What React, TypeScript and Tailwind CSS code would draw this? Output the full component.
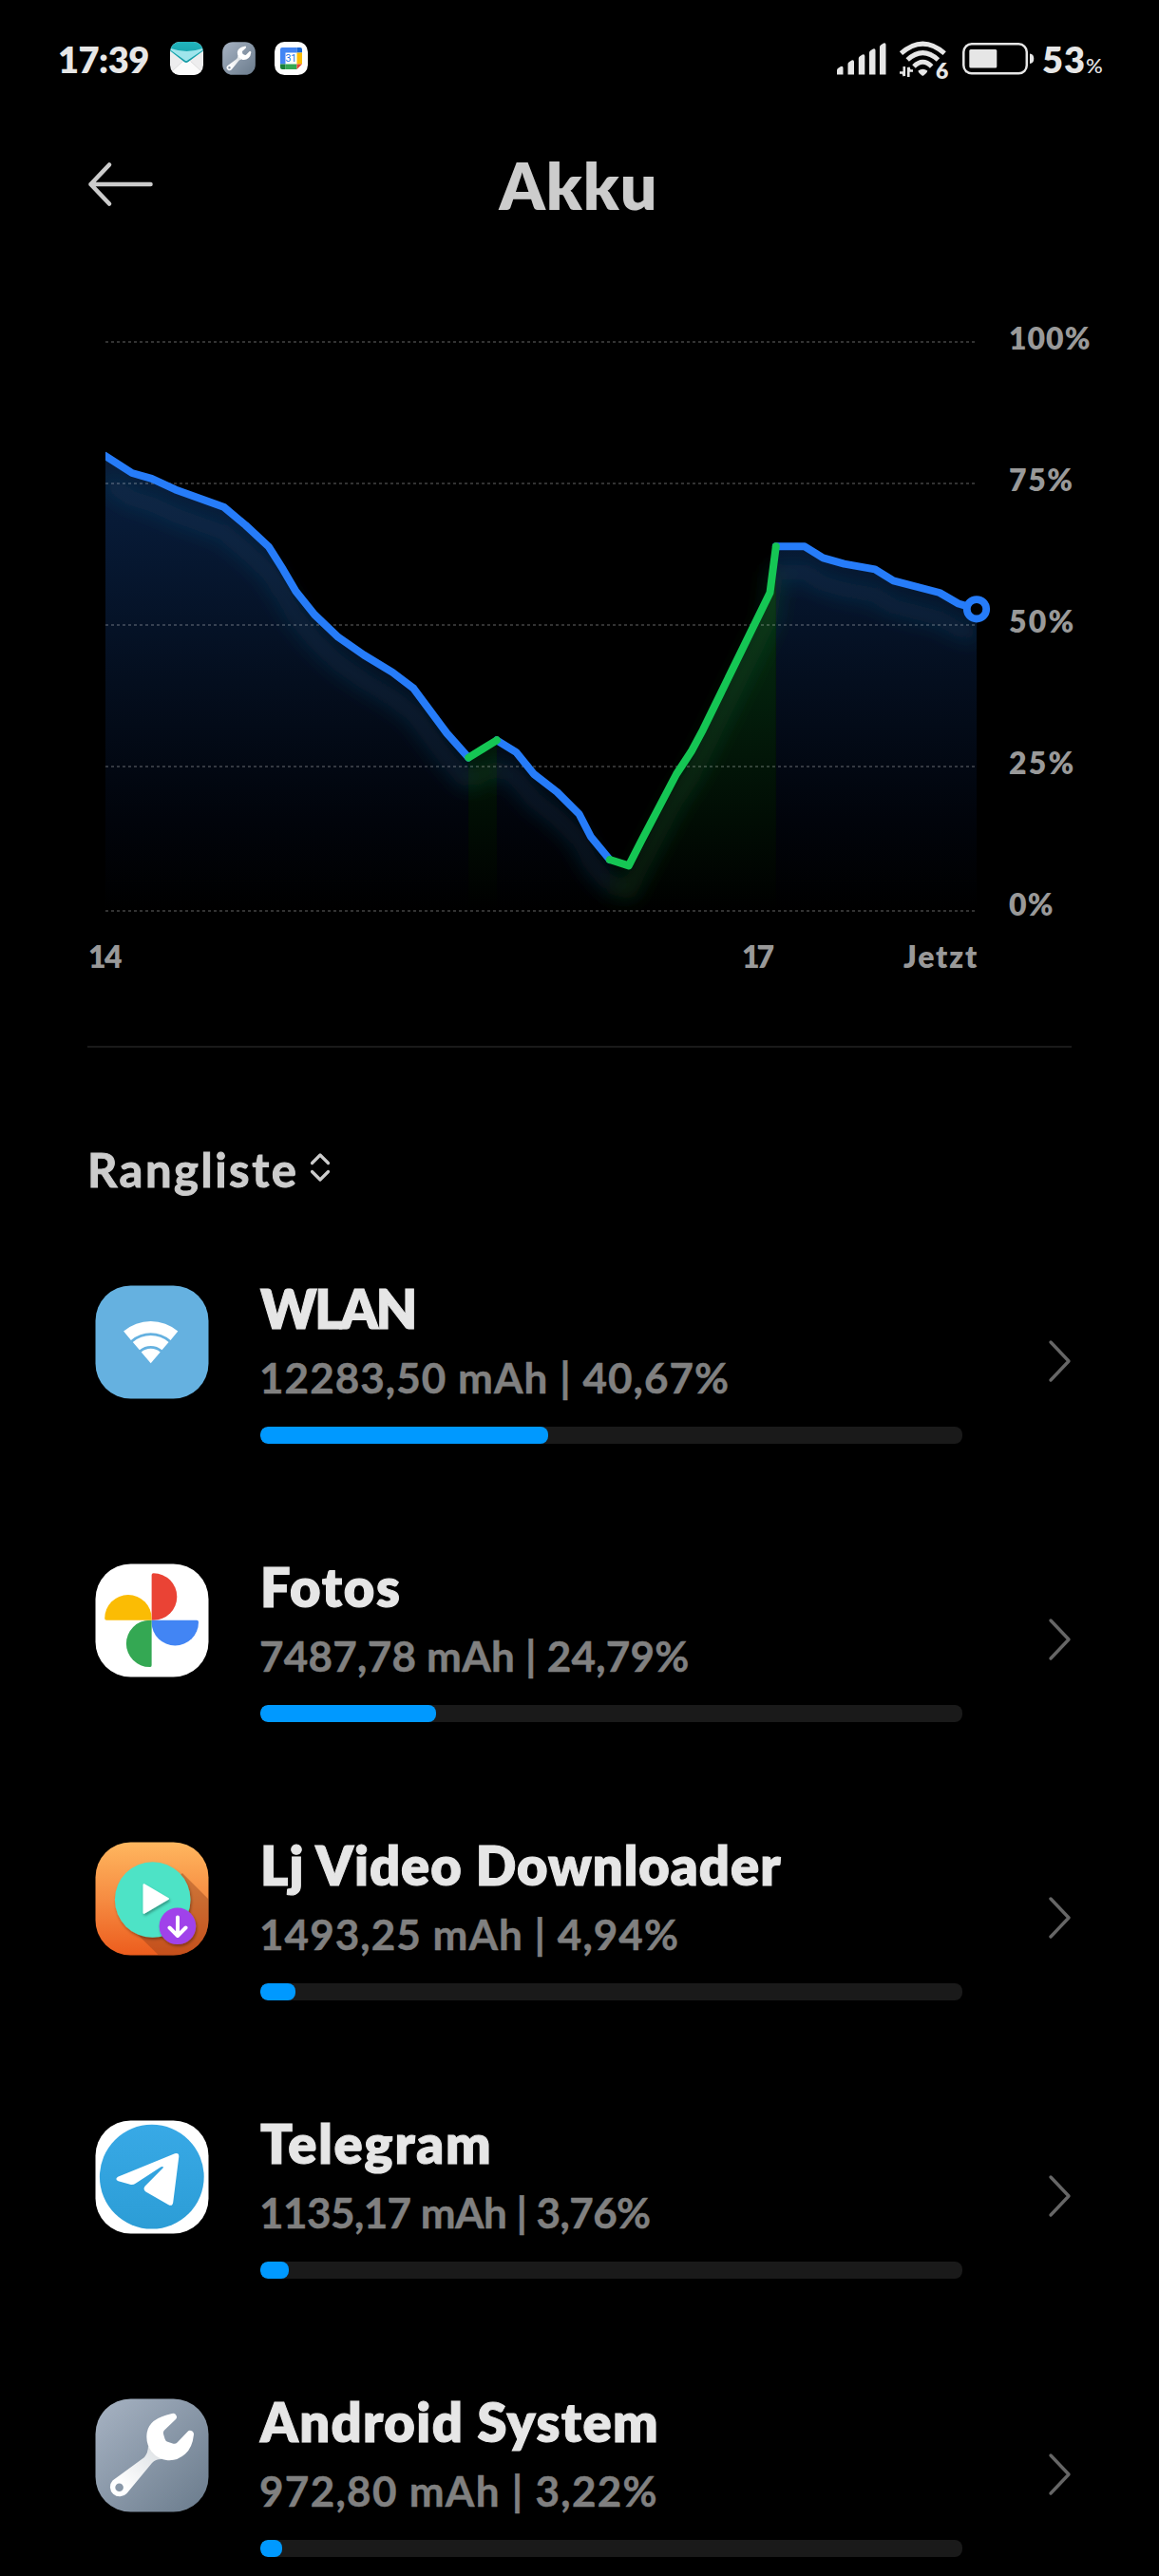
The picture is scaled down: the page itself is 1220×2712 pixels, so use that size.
import type { ReactNode } from "react";

type Point = [number, number];

/* ---------- Status bar ---------- */

function MailIcon() {
  return (
    <svg viewBox="0 0 35 35" className="size-[35px]">
      <defs>
        <clipPath id="mail-clip"><rect width="35" height="35" rx="10.5" /></clipPath>
        <linearGradient id="mail-top" x1="0" y1="0" x2="0" y2="1">
          <stop offset="0" stopColor="#22b5bd" />
          <stop offset="1" stopColor="#1299a3" />
        </linearGradient>
      </defs>
      <g clipPath="url(#mail-clip)">
        <rect width="35" height="35" fill="#ededee" />
        <path d="M0 33 L14 20 H21 L35 33 V35 H0z" fill="#fbfbfb" />
        <path d="M1.5 31.500 L13.500 20.500 M33.500 31.500 L21.500 20.500" stroke="#cfcfd0" strokeWidth=".6" />
        <path d="M0 0H35V9.500 L19 21.300 Q17 22.800 15 21.300 L0 9.500z" fill="url(#mail-top)" />
        <path d="M1 7 Q17.500 13 34 7 L34 9 L18.500 19.600 Q17 20.700 15.500 19.600 L1 9z" fill="#9fe5ec" />
      </g>
    </svg>
  );
}

function WrenchIcon({ id, className }: { id: string; className: string }) {
  return (
    <svg viewBox="0 0 120 120" className={className}>
      <defs>
        <linearGradient id={`${id}-bg`} x1="0" y1="0" x2="1" y2="1">
          <stop offset="0" stopColor="#a7b3c3" />
          <stop offset="1" stopColor="#6a7b8c" />
        </linearGradient>
        <linearGradient id={`${id}-arm`} x1="66" y1="56" x2="30" y2="95" gradientUnits="userSpaceOnUse">
          <stop offset="0" stopColor="#dfe3e6" />
          <stop offset="1" stopColor="#ffffff" />
        </linearGradient>
      </defs>
      <rect x=".5" y=".5" width="119" height="119" rx="37" fill={`url(#${id}-bg)`} />
      <path
        fillRule="evenodd"
        fill={`url(#${id}-arm)`}
        d="M56 50 Q56 57 52 62 L18.500 86.500 A10 10 0 1 0 33.500 100 L60 68 Q64 63.500 71 64z M25.600 89.400 a4.300 4.300 0 1 1 0 8.600 a4.300 4.300 0 1 1 0 -8.600z"
      />
      <path
        fill="#fff"
        d="M81 16 Q84.500 14.800 85.800 18.500 Q86.500 20.500 85 22 L73 33.500 Q71.500 35 72 37.500 L73.500 42.500 Q74.200 45 76.500 45.800 L82.500 47.700 Q84.800 48.300 86.500 46.500 L97.500 35 Q99 33.400 101 34 Q104.200 35 104 38 Q102.500 52 95 58.500 Q86.500 66 76.500 65.200 Q66 64 59.500 56 Q53 47 54.700 36 Q57 21 81 16z"
      />
    </svg>
  );
}

function CalendarIcon() {
  return (
    <svg viewBox="0 0 35 35" className="size-[35px]">
      <rect width="35" height="35" rx="10.500" fill="#fff" />
      <path d="M6 8 Q6 6 8 6H23.500V11.500H11.500V23.500H6z" fill="#4285f4" />
      <path d="M23.500 6H27 Q29 6 29 8V11.500H23.500z" fill="#1967d2" />
      <path d="M23.500 11.500H29V23.500H23.500z" fill="#fbbc04" />
      <path d="M11.500 23.500H23.500V29H11.500z" fill="#34a853" />
      <path d="M6 23.500H11.500V29H8 Q6 29 6 27z" fill="#188038" />
      <path d="M23.500 23.500H29L23.500 29z" fill="#ea4335" />
      <text x="17.300" y="21.300" textAnchor="middle" fontSize="10.500" fontFamily="Roboto, sans-serif" fill="#1a73e8">31</text>
    </svg>
  );
}

function SignalIcon() {
  const bars: Point[] = [[1, 25.500], [12.500, 19], [23.800, 13], [35, 7], [46, 1]];
  return (
    <svg viewBox="0 0 54 36" className="h-9 w-[54px]" fill="#e6e6e6">
      {bars.map(([x, top]) => (
        <path key={x} d={`M${x} ${top + 4.500} Q${x} ${top + 3} ${x + 1.300} ${top + 2.200} L${x + 4} ${top + 0.400} Q${x + 6.500} ${top - 0.500} ${x + 6.500} ${top + 2} V34.500 H${x}z`} />
      ))}
    </svg>
  );
}

function StatusWifiIcon() {
  return (
    <svg viewBox="0 0 56 50" className="h-[50px] w-14">
      <g fill="none" stroke="#e6e6e6" strokeWidth="5" strokeLinecap="butt">
        <path d="M3.500 15.200 Q26.300 -5 49.200 15.200" />
        <path d="M10.200 22 Q26.300 7.300 42.500 22" />
        <path d="M17 29 Q26.300 19.500 35.700 29" />
      </g>
      <path d="M21.500 33.500 Q26.300 30 31.300 33.500 Q31.500 35 27.500 38.300 Q26.300 39.300 25.200 38.300 Q21.200 35 21.500 33.500z" fill="#e6e6e6" />
      <g stroke="#e6e6e6" strokeWidth="2.600" fill="none">
        <path d="M6.800 29V39 M2 35.500 H5.500 L6.800 39" />
        <path d="M11.300 40V30 L12.600 33.500 H16" />
      </g>
      <text x="39.900" y="42.300" fontSize="23" fontFamily="Lato, sans-serif" fontWeight="800" fill="#e6e6e6" stroke="#000" strokeWidth="3" paintOrder="stroke">6</text>
    </svg>
  );
}

function BatteryIcon() {
  return (
    <svg viewBox="0 0 76 34" className="h-[34px] w-[76px]">
      <rect x="1.300" y="1.300" width="66.500" height="31" rx="8.500" fill="none" stroke="#e6e6e6" strokeWidth="2.500" />
      <rect x="7.300" y="7" width="29" height="19.500" rx="1.500" fill="#e6e6e6" />
      <path d="M71 11.500 Q75.300 12 75.300 16.800 Q75.300 21.500 71 22z" fill="#e6e6e6" />
    </svg>
  );
}

function StatusBar() {
  return (
    <div className="flex h-[140px] shrink-0 items-start pt-[42px] pr-[59px] pl-[61px] text-[#e6e6e6]">
      <span className="w-[118px] text-[38px] leading-10 font-extrabold tracking-[-0.5px]">17:39</span>
      <div className="mt-0.5 flex gap-5">
        <MailIcon />
        <WrenchIcon id="status-wrench" className="size-[35px]" />
        <CalendarIcon />
      </div>
      <div className="mt-0.5 ml-auto flex items-start">
        <SignalIcon />
        <div className="-mt-[3px] ml-[11px]"><StatusWifiIcon /></div>
        <div className="mt-px ml-3"><BatteryIcon /></div>
      </div>
      <div className="ml-2 flex w-16 items-baseline leading-10">
        <span className="text-[38px] font-extrabold tracking-[1px]">53</span>
        <span className="text-[22px] font-medium">%</span>
      </div>
    </div>
  );
}

/* ---------- Chart ---------- */

type Run = { kind: "drain" | "charge"; points: Point[] };

const runs: Run[] = [
  {
    kind: "drain",
    points: [
      [111, 480], [139, 498], [159.600, 503.800], [184.600, 515.400], [235.400, 533.700], [258.600, 553], [282.900, 575.700],
      [297.900, 599.400], [311.400, 622.600], [331, 647], [356, 670.800], [382.900, 689.500], [413.200, 707.900],
      [435.400, 724.800], [470.400, 772], [493.200, 797.600],
    ],
  },
  {
    kind: "drain",
    points: [
      [522.900, 779.300], [543.200, 791.800], [562, 815], [586.400, 833.800], [609.600, 857], [622, 881], [641.800, 905],
    ],
  },
  {
    kind: "drain",
    points: [
      [816.800, 575.300], [847, 575.300], [866.400, 587.300], [888.600, 593.600], [921, 599.400], [940.400, 611.400],
      [989, 624], [1008.800, 635.500], [1028, 641.300],
    ],
  },
  { kind: "charge", points: [[493.200, 797.600], [522.900, 779.300]] },
  {
    kind: "charge",
    points: [
      [641.800, 905], [661.800, 911.400], [675, 885.500], [712, 815], [727.600, 791.300], [739.800, 768.600], [810.500, 624],
      [816.800, 575.300],
    ],
  },
];

const GRID = [360, 509, 658, 807, 959];
const BASE = 958;
const lineColor = { drain: "#267cf9", charge: "#15c654" };
const toLine = (pts: Point[]) => "M" + pts.map(([x, y]) => `${x} ${y}`).join("L");
const toArea = (pts: Point[]) => `${toLine(pts)}L${pts[pts.length - 1][0]} ${BASE}L${pts[0][0]} ${BASE}z`;

function BatteryChart() {
  return (
    <svg viewBox="93 340 967 640" className="h-[640px] w-[967px] shrink-0">
      <defs>
        <linearGradient id="area-drain" x1="0" y1="480" x2="0" y2={BASE} gradientUnits="userSpaceOnUse">
          <stop offset="0" stopColor="#091e3a" />
          <stop offset=".15" stopColor="#071a36" />
          <stop offset=".5" stopColor="#040e1e" />
          <stop offset=".8" stopColor="#01040b" />
          <stop offset="1" stopColor="#000000" />
        </linearGradient>
        <linearGradient id="area-charge" x1="0" y1="575" x2="0" y2={BASE} gradientUnits="userSpaceOnUse">
          <stop offset="0" stopColor="#053312" />
          <stop offset=".4" stopColor="#031f0c" />
          <stop offset=".75" stopColor="#010d04" />
          <stop offset="1" stopColor="#000000" />
        </linearGradient>
        <filter id="glow" x="93" y="340" width="967" height="640" filterUnits="userSpaceOnUse">
          <feGaussianBlur stdDeviation="10" />
        </filter>
        <clipPath id="plot"><rect x="111" y="340" width="917" height="640" /></clipPath>
      </defs>
      <g clipPath="url(#plot)">
        {runs.map((r, i) => (
          <path key={i} d={toArea(r.points)} fill={`url(#area-${r.kind})`} />
        ))}
        <g filter="url(#glow)" fill="none" strokeWidth="17" transform="translate(0 27)">
          {runs.map((r, i) => (
            <path key={i} d={toLine(r.points)} stroke={r.kind === "drain" ? "#1c527a" : "#1f6a35"} strokeOpacity=".3" />
          ))}
        </g>
      </g>
      {GRID.map((y) => (
        <path key={y} d={`M111 ${y + 1}H1028`} stroke="#fff" strokeOpacity=".2" strokeWidth="2" strokeDasharray="3 3" transform="translate(0 -1)" />
      ))}
      <g clipPath="url(#plot)" fill="none" strokeWidth="8" strokeLinecap="round" strokeLinejoin="round">
        {runs.map((r, i) => (
          <path key={i} d={toLine(r.points)} stroke={lineColor[r.kind]} />
        ))}
      </g>
      <circle cx="1028" cy="641.300" r="10.200" fill="#000" stroke="#267cf9" strokeWidth="7.800" />
    </svg>
  );
}

/* ---------- App icons ---------- */

function WlanIcon() {
  return (
    <svg viewBox="0 0 120 120" className="size-[120px]">
      <rect x=".5" y=".5" width="119" height="119" rx="37" fill="#65b1e0" />
      <g fill="#fff" transform="translate(58.700 82.300)">
        <path d="M-28.600 -33.800A44.300 44.300 0 0 1 28.600 -33.800L20.800 -24.400A32 32 0 0 0 -20.800 -24.400z" />
        <path d="M-18.900 -22.400A29.300 29.300 0 0 1 18.900 -22.400L11.800 -14A18.300 18.300 0 0 0 -11.800 -14z" />
        <path d="M-10 -11.900A15.600 15.600 0 0 1 10 -11.900L0 0z" />
      </g>
    </svg>
  );
}

function PhotosIcon() {
  const leaf = "M0 0V-47.500Q0 -49.400 2 -49.400A24.700 24.700 0 0 1 2 0z";
  return (
    <svg viewBox="0 0 120 120" className="size-[120px]">
      <rect x=".5" y=".5" width="119" height="119" rx="37" fill="#fff" />
      <g transform="translate(59.600 59.700)">
        <path d={leaf} fill="#ea4335" />
        <path d={leaf} fill="#4285f4" transform="rotate(90)" />
        <path d={leaf} fill="#34a853" transform="rotate(180)" />
        <path d={leaf} fill="#fbbc04" transform="rotate(270)" />
      </g>
    </svg>
  );
}

function VideoDownloaderIcon() {
  return (
    <svg viewBox="0 0 120 120" className="size-[120px]">
      <defs>
        <linearGradient id="lj-bg" x1="0" y1="0" x2="0" y2="1">
          <stop offset="0" stopColor="#ffb75f" />
          <stop offset=".5" stopColor="#f68c42" />
          <stop offset="1" stopColor="#ec5c1d" />
        </linearGradient>
        <clipPath id="lj-clip"><rect x=".5" y=".5" width="119" height="119" rx="37" /></clipPath>
        <filter id="lj-shadow" x="-20%" y="-20%" width="150%" height="150%">
          <feDropShadow dx="1" dy="2" stdDeviation="1.500" floodColor="#000" floodOpacity=".35" />
        </filter>
      </defs>
      <g clipPath="url(#lj-clip)">
        <rect width="120" height="120" fill="url(#lj-bg)" />
        <path d="M92 33L150 91V150H98L32 85z" fill="#8a3d1a" fillOpacity=".4" />
        <circle cx="60.700" cy="61" r="39.800" fill="#4ee3c6" filter="url(#lj-shadow)" />
        <path d="M51.500 45.200L77 60L51.500 74.800z" fill="#fff" stroke="#fff" strokeWidth="2" strokeLinejoin="round" filter="url(#lj-shadow)" />
        <circle cx="86.900" cy="88.800" r="19.300" fill="#a042ea" filter="url(#lj-shadow)" />
        <path d="M87 79.500V98M78.500 90.500L87 99L95.500 90.500" fill="none" stroke="#fff" strokeWidth="4" strokeLinecap="round" strokeLinejoin="round" />
      </g>
    </svg>
  );
}

function TelegramIcon() {
  return (
    <svg viewBox="0 0 120 120" className="size-[120px]">
      <defs>
        <linearGradient id="tg-bg" x1="0" y1="0" x2="0" y2="1">
          <stop offset="0" stopColor="#38a9e6" />
          <stop offset="1" stopColor="#2c9dd6" />
        </linearGradient>
      </defs>
      <rect x=".5" y=".5" width="119" height="119" rx="37" fill="#fff" />
      <circle cx="59.800" cy="59.700" r="54.900" fill="url(#tg-bg)" />
      <path
        d="M24 59.800L84 35.300Q88.500 34 88.300 38.500L82.200 86.800Q81.500 91.500 77 89L53.500 75.600Q50 72.800 52.700 69.500L71.500 50.500Q73 48.200 69.500 49.300L43 66.500Q40 68.600 37 67.800L24.500 64.300Q20.500 62.300 24 59.800z"
        fill="#fff"
      />
    </svg>
  );
}

/* ---------- Ranking ---------- */

type Entry = { name: string; nameTracking: string; usage: string; usageTracking: string; bar: number; icon: ReactNode };

const entries: Entry[] = [
  { name: "WLAN", nameTracking: "tracking-[-2.4px]", usage: "12283,50 mAh | 40,67%", usageTracking: "tracking-[1.05px]", bar: 303, icon: <WlanIcon /> },
  { name: "Fotos", nameTracking: "tracking-[1.8px]", usage: "7487,78 mAh | 24,79%", usageTracking: "tracking-[0.25px]", bar: 185, icon: <PhotosIcon /> },
  { name: "Lj Video Downloader", nameTracking: "tracking-[1px]", usage: "1493,25 mAh | 4,94%", usageTracking: "tracking-[1.05px]", bar: 37, icon: <VideoDownloaderIcon /> },
  { name: "Telegram", nameTracking: "tracking-[1.8px]", usage: "1135,17 mAh | 3,76%", usageTracking: "tracking-[-0.55px]", bar: 30, icon: <TelegramIcon /> },
  { name: "Android System", nameTracking: "tracking-[1.4px]", usage: "972,80 mAh | 3,22%", usageTracking: "tracking-[1.3px]", bar: 23, icon: <WrenchIcon id="app-wrench" className="size-[120px]" /> },
];

function Row({ entry }: { entry: Entry }) {
  return (
    <li className="flex h-[293px] shrink-0 items-start pr-[91px] pl-[100px]">
      <div className="mt-[5px] w-[174px] shrink-0">{entry.icon}</div>
      <div className="w-[739px] shrink-0">
        <div className={`text-[56px] leading-[60px] font-extrabold whitespace-nowrap text-[#e6e6e6] [-webkit-text-stroke:1px_#e6e6e6] ${entry.nameTracking}`}>{entry.name}</div>
        <div className={`mt-[17px] -ml-px text-[44px] leading-[50px] font-bold whitespace-nowrap text-[#808080] [-webkit-text-stroke:0.5px_#808080] ${entry.usageTracking}`}>{entry.usage}</div>
        <div className="mt-[27px] h-[18px] overflow-hidden rounded-[8px] bg-[#1a1a1a]">
          <div className="h-full rounded-[8px] bg-[#0099ff]" style={{ width: entry.bar }} />
        </div>
      </div>
      <svg viewBox="0 0 26 46" className="mt-[62px] ml-auto h-[46px] w-[26px]">
        <path d="M3 3L22 23L3 43" fill="none" stroke="#666" strokeWidth="3.400" strokeLinecap="round" strokeLinejoin="round" />
      </svg>
    </li>
  );
}

export default function App() {
  return (
    <main className="flex h-[2712px] w-[1220px] flex-col overflow-hidden bg-black font-['Lato','Liberation_Sans',sans-serif]">
      <StatusBar />

      <header className="flex h-[200px] shrink-0 items-start px-[91px] pt-[15px] text-[#cccccc]">
        <svg viewBox="0 0 72 50" className="mt-[14px] h-[50px] w-[72px]">
          <path d="M24 4.500L4.500 25L24 45.500M4.500 25H67.500" fill="none" stroke="#ccc" strokeWidth="4.600" strokeLinecap="round" strokeLinejoin="round" />
        </svg>
        <h1 className="flex-1 pr-[74px] text-center text-[68px] leading-[80px] font-extrabold tracking-[1px]">Akku</h1>
      </header>

      <section className="shrink-0">
        <div className="flex h-[640px] pl-[93px]">
          <BatteryChart />
          <div className="-mt-1 ml-[2px] text-[32px] leading-10 font-extrabold text-[#999999]">
            <div className="h-[149px] tracking-[1px]">100%</div>
            <div className="h-[149px] tracking-[1.6px]">75%</div>
            <div className="h-[149px] tracking-[2.2px]">50%</div>
            <div className="h-[149px] tracking-[2.2px]">25%</div>
            <div className="tracking-[1.3px]">0%</div>
          </div>
        </div>
        <div className="mt-[7px] flex pr-[190px] pl-[93px] text-[32px] leading-10 font-extrabold text-[#999999]">
          <span className="w-[688px] tracking-[-1.6px]">14</span>
          <span className="tracking-[-3px]">17</span>
          <span className="ml-auto tracking-[1.8px]">Jetzt</span>
        </div>
      </section>

      <div className="mx-[92px] mt-[74px] h-0.5 shrink-0 bg-[#1a1a1a]" />

      <div className="mt-[98px] flex shrink-0 items-start pl-[92px] text-[#cccccc]">
        <h2 className="text-[49px] leading-[60px] font-bold tracking-[2.5px] [-webkit-text-stroke:1px_#cccccc]">Rangliste</h2>
        <svg viewBox="0 0 24 32" className="mt-3 ml-[11px] h-8 w-6">
          <path d="M3.500 11.500L12 3L20.500 11.500M3.500 20.500L12 29L20.500 20.500" fill="none" stroke="#ccc" strokeWidth="3.200" strokeLinecap="round" strokeLinejoin="round" />
        </svg>
      </div>

      <ul className="mt-[87px]">
        {entries.map((e) => (
          <Row key={e.name} entry={e} />
        ))}
      </ul>
    </main>
  );
}
